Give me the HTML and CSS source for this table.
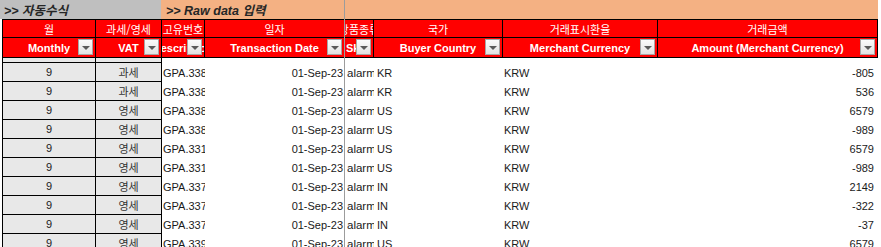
FILE: index.html
```html
<!DOCTYPE html>
<html lang="ko">
<head>
<meta charset="utf-8">
<title>Sheet</title>
<link rel="stylesheet" href="styles.css">
</head>
<body>
<div class="sheet">
  <div class="sections">
    <div class="sec sec-auto">&gt;&gt; 자동수식</div>
    <div class="sec sec-raw">&gt;&gt; Raw data 입력</div>
  </div>

  <div class="head">
    <div class="hk"><span>월</span></div>
    <div class="hk"><span>과세/영세</span></div>
    <div class="hk"><span>고유번호</span></div>
    <div class="hk"><span>일자</span></div>
    <div class="hk"><span>상품종류</span></div>
    <div class="hk"><span>국가</span></div>
    <div class="hk"><span>거래표시환율</span></div>
    <div class="hk"><span>거래금액</span></div>

    <div class="he"><span>Monthly</span><i class="dd"></i></div>
    <div class="he"><span>VAT</span><i class="dd"></i></div>
    <div class="he"><span>Description</span><i class="dd"></i></div>
    <div class="he"><span>Transaction Date</span><i class="dd"></i></div>
    <div class="he he-left"><span>Sku</span><i class="dd"></i></div>
    <div class="he"><span>Buyer Country</span><i class="dd"></i></div>
    <div class="he"><span>Merchant Currency</span><i class="dd"></i></div>
    <div class="he"><span>Amount (Merchant Currency)</span><i class="dd"></i></div>
  </div>

  <div class="row split">
    <div class="c c-a"></div><div class="c c-b"></div><div class="c"></div><div class="c"></div>
    <div class="c"></div><div class="c"></div><div class="c"></div><div class="c"></div>
  </div>

  <div class="row">
    <div class="c c-a">9</div><div class="c c-b">과세</div>
    <div class="c c-c">GPA.3382-4417</div><div class="c c-d">01-Sep-23</div>
    <div class="c c-e">alarm</div><div class="c c-f">KR</div>
    <div class="c c-g">KRW</div><div class="c c-h">-805</div>
  </div>
  <div class="row">
    <div class="c c-a">9</div><div class="c c-b">과세</div>
    <div class="c c-c">GPA.3382-4417</div><div class="c c-d">01-Sep-23</div>
    <div class="c c-e">alarm</div><div class="c c-f">KR</div>
    <div class="c c-g">KRW</div><div class="c c-h">536</div>
  </div>
  <div class="row">
    <div class="c c-a">9</div><div class="c c-b">영세</div>
    <div class="c c-c">GPA.3389-1025</div><div class="c c-d">01-Sep-23</div>
    <div class="c c-e">alarm</div><div class="c c-f">US</div>
    <div class="c c-g">KRW</div><div class="c c-h">6579</div>
  </div>
  <div class="row">
    <div class="c c-a">9</div><div class="c c-b">영세</div>
    <div class="c c-c">GPA.3389-1025</div><div class="c c-d">01-Sep-23</div>
    <div class="c c-e">alarm</div><div class="c c-f">US</div>
    <div class="c c-g">KRW</div><div class="c c-h">-989</div>
  </div>
  <div class="row">
    <div class="c c-a">9</div><div class="c c-b">영세</div>
    <div class="c c-c">GPA.3311-6650</div><div class="c c-d">01-Sep-23</div>
    <div class="c c-e">alarm</div><div class="c c-f">US</div>
    <div class="c c-g">KRW</div><div class="c c-h">6579</div>
  </div>
  <div class="row">
    <div class="c c-a">9</div><div class="c c-b">영세</div>
    <div class="c c-c">GPA.3311-6650</div><div class="c c-d">01-Sep-23</div>
    <div class="c c-e">alarm</div><div class="c c-f">US</div>
    <div class="c c-g">KRW</div><div class="c c-h">-989</div>
  </div>
  <div class="row">
    <div class="c c-a">9</div><div class="c c-b">영세</div>
    <div class="c c-c">GPA.3374-8812</div><div class="c c-d">01-Sep-23</div>
    <div class="c c-e">alarm</div><div class="c c-f">IN</div>
    <div class="c c-g">KRW</div><div class="c c-h">2149</div>
  </div>
  <div class="row">
    <div class="c c-a">9</div><div class="c c-b">영세</div>
    <div class="c c-c">GPA.3374-8812</div><div class="c c-d">01-Sep-23</div>
    <div class="c c-e">alarm</div><div class="c c-f">IN</div>
    <div class="c c-g">KRW</div><div class="c c-h">-322</div>
  </div>
  <div class="row">
    <div class="c c-a">9</div><div class="c c-b">영세</div>
    <div class="c c-c">GPA.3374-8812</div><div class="c c-d">01-Sep-23</div>
    <div class="c c-e">alarm</div><div class="c c-f">IN</div>
    <div class="c c-g">KRW</div><div class="c c-h">-37</div>
  </div>
  <div class="row">
    <div class="c c-a">9</div><div class="c c-b">영세</div>
    <div class="c c-c">GPA.3395-3306</div><div class="c c-d">01-Sep-23</div>
    <div class="c c-e">alarm</div><div class="c c-f">US</div>
    <div class="c c-g">KRW</div><div class="c c-h">6579</div>
  </div>

  <div class="pane-line"></div>
</div>
</body>
</html>
```

FILE: styles.css
```css
* { box-sizing: border-box; }

html, body {
  margin: 0;
  padding: 0;
  background: #ffffff;
  overflow: hidden;
}

.sheet {
  position: relative;
  width: 881px;
  height: 247px;
  overflow: hidden;
  font-family: "Liberation Sans", "Noto Sans CJK KR", sans-serif;
  font-size: 11px;
  color: #1a1a1a;
}

/* section bar */
.sections {
  display: flex;
  height: 19px;
}
.sec {
  display: flex;
  align-items: center;
  font-style: italic;
  font-weight: bold;
  font-size: 12.5px;
  color: #262626;
  white-space: nowrap;
}
.sec-auto {
  width: 161px;
  background: #bfbfbf;
  padding-left: 4px;
}
.sec-raw {
  width: 717px;
  background: #f4b183;
  padding-left: 5px;
}

/* header block */
.head {
  display: grid;
  margin-left: 2px;
  width: 876px;
  grid-template-columns: 92px 65px 42px 139px 28px 128px 154px 219px;
  grid-template-rows: 17px 19px;
  gap: 1px;
  padding: 1px;
  background: #000000;
}
.hk, .he {
  position: relative;
  background: #ff0000;
  color: #ffffff;
  display: flex;
  align-items: center;
  justify-content: center;
  overflow: hidden;
  white-space: nowrap;
}
.hk span, .he span { flex-shrink: 0; }
.hk {
  font-family: "Noto Sans CJK KR", sans-serif;
  font-size: 11px;
}
.he {
  font-weight: bold;
  font-size: 11px;
}
.he-left {
  justify-content: flex-start;
  padding-left: 1px;
}

/* filter dropdown */
.dd {
  position: absolute;
  right: 2px;
  top: 1px;
  width: 15px;
  height: 16px;
  border: 1px solid #a6a6a6;
  background: linear-gradient(#fbfbfb, #e2e2e2);
}
.dd::after {
  content: "";
  position: absolute;
  left: 3px;
  top: 6px;
  border-left: 4px solid transparent;
  border-right: 4px solid transparent;
  border-top: 4px solid #5a5a5a;
}

/* data rows */
.row {
  display: grid;
  margin-left: 2px;
  width: 876px;
  grid-template-columns: 94px 66px 43px 140px 29px 129px 155px 220px;
  height: 19px;
}
.row.split { height: 5px; }

.c {
  display: flex;
  align-items: center;
  overflow: hidden;
  white-space: nowrap;
}
.c-a, .c-b {
  justify-content: center;
  background: #e8e8e8;
  border-right: 1px solid #000000;
  border-bottom: 1px solid #000000;
}
.c-a { border-left: 1px solid #000000; }
.c-b { color: #333333; }
.c-c { padding-left: 1px; }
.c-d { justify-content: flex-end; padding-right: 2px; }
.c-e { padding-left: 2px; font-size: 11.5px; }
.c-f { padding-left: 3px; }
.c-g { padding-left: 1px; }
.c-h { justify-content: flex-end; padding-right: 4px; }

/* frozen pane divider */
.pane-line {
  position: absolute;
  left: 344px;
  top: 0;
  width: 1px;
  height: 247px;
  background: #9c9c9c;
}
```
